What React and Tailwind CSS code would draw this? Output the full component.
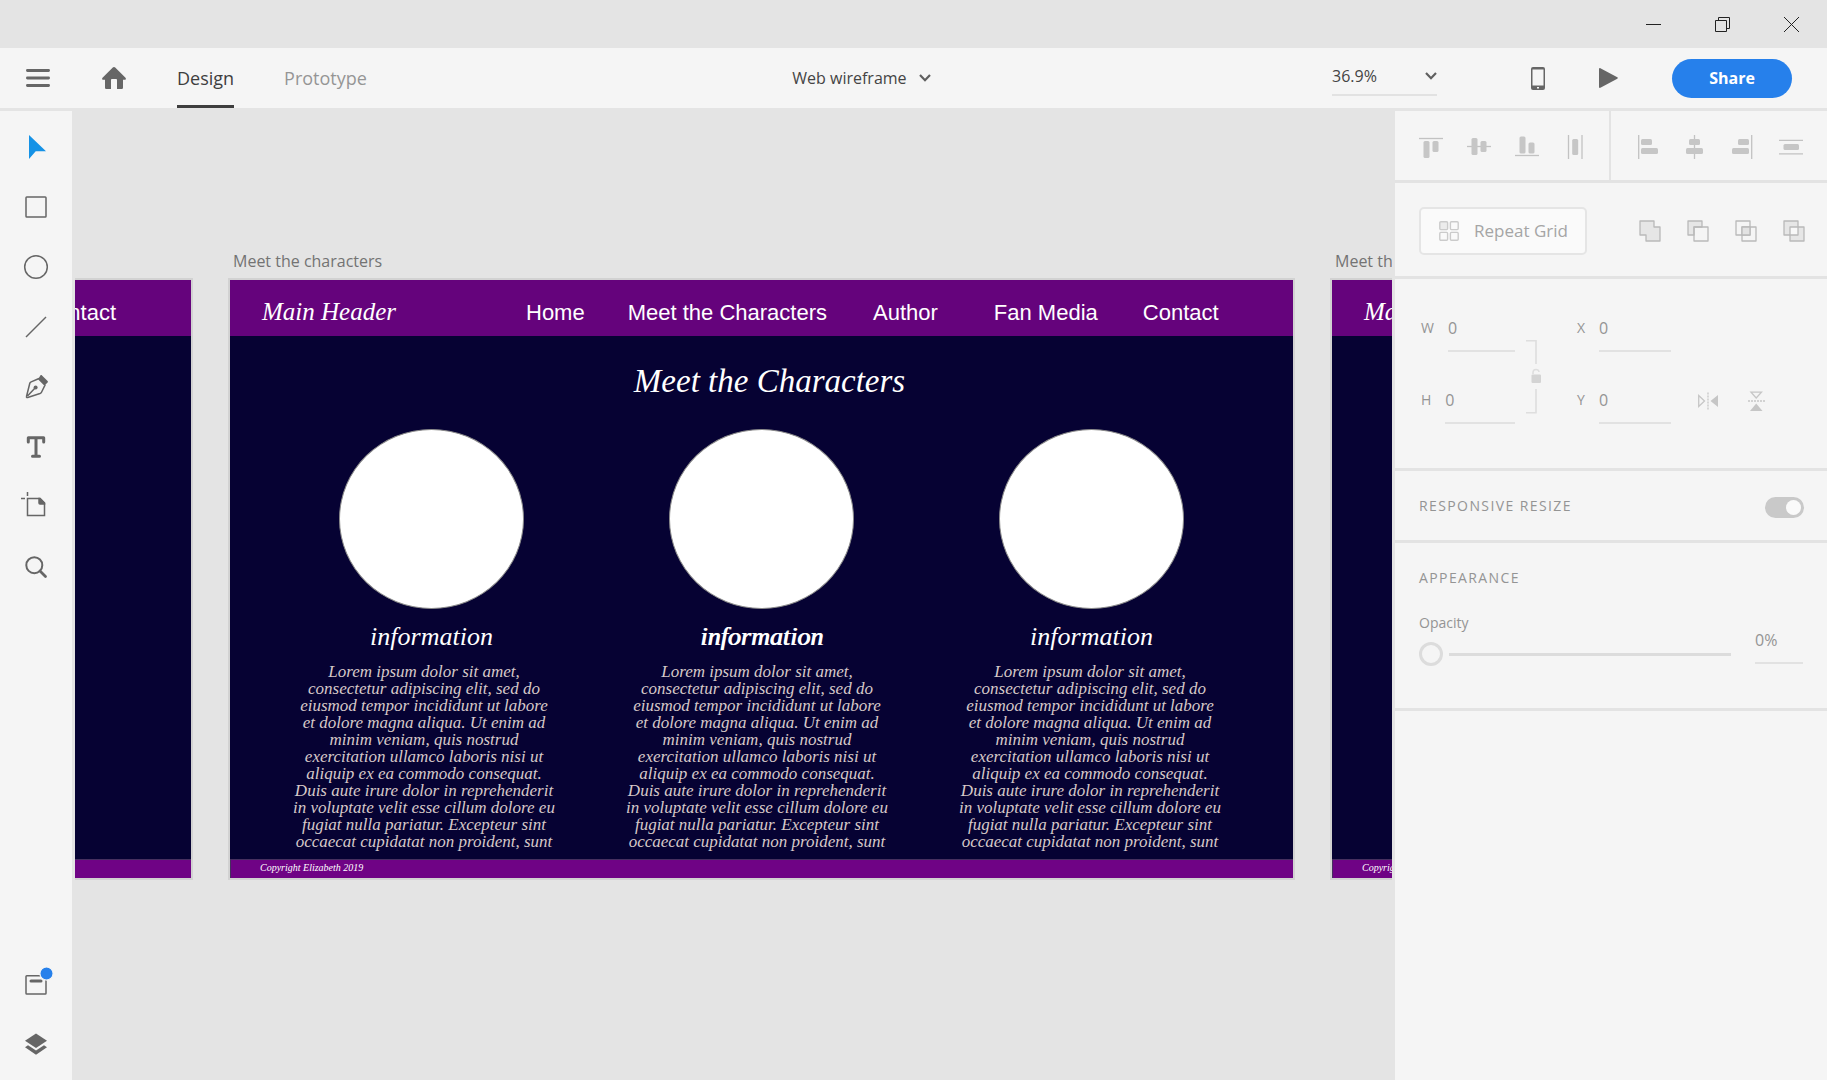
import React from "react";

const SCRIPT = "font-['Liberation_Serif',serif] italic";

const LOREM = [
  "Lorem ipsum dolor sit amet,",
  "consectetur adipiscing elit, sed do",
  "eiusmod tempor incididunt ut labore",
  "et dolore magna aliqua. Ut enim ad",
  "minim veniam, quis nostrud",
  "exercitation ullamco laboris nisi ut",
  "aliquip ex ea commodo consequat.",
  "Duis aute irure dolor in reprehenderit",
  "in voluptate velit esse cillum dolore eu",
  "fugiat nulla pariatur. Excepteur sint",
  "occaecat cupidatat non proident, sunt",
];

function TitleBar() {
  return (
    <div className="flex h-12 shrink-0 justify-end">
      <button aria-label="Minimize" className="flex w-[69px] items-center justify-center">
        <svg width="15" height="15" viewBox="0 0 15 15" stroke="#222" fill="none"><path d="M0 7.5H15" /></svg>
      </button>
      <button aria-label="Restore" className="flex w-[69px] items-center justify-center">
        <svg width="15" height="15" viewBox="0 0 15 15" stroke="#222" fill="none"><path d="M.5 3.5H11.500V14.500H.5ZM3.500 3.500V.5H14.500V11.500H11.500" /></svg>
      </button>
      <button aria-label="Close" className="mr-px flex w-[69px] items-center justify-center">
        <svg width="15" height="15" viewBox="0 0 15 15" stroke="#222" fill="none"><path d="M0 0L15 15M15 0L0 15" /></svg>
      </button>
    </div>
  );
}

function Chevron() {
  return (
    <svg width="12" height="8" viewBox="0 0 12 8" fill="none" stroke="#5f5f5f" strokeWidth="2.200"><path d="M1 1L6 6.200L11 1" /></svg>
  );
}

function AppBar() {
  return (
    <header className="flex h-[60px] shrink-0 items-stretch bg-[#f5f5f5]">
      <button aria-label="Menu" className="flex w-[76px] items-center justify-center">
        <svg width="24" height="20" viewBox="0 0 24 20" stroke="#666" strokeWidth="2.800" strokeLinecap="round"><path d="M1.400 2.500H22.600M1.400 10H22.600M1.400 17.500H22.600" /></svg>
      </button>
      <button aria-label="Home" className="flex w-[76px] items-center justify-center">
        <svg width="24" height="22" viewBox="0 0 24 22" fill="#666"><path d="M12 0C12.500 0 12.900.2 13.200.5L23.500 10.800C24.200 11.500 23.900 12.700 22.900 12.700H21V20.500C21 21.400 20.600 22 19.800 22H15V13.200C15 12.500 14.600 12 14 12H10C9.400 12 9 12.500 9 13.200V22H4.200C3.400 22 3 21.400 3 20.500V12.700H1.100C.1 12.700-.2 11.500.5 10.800L10.800.5C11.100.2 11.500 0 12 0Z" /></svg>
      </button>
      <nav className="ml-[25px] flex gap-[50px] text-[18px]">
        <button className="border-b-[3px] border-[#3e3e3e] pt-1 text-[#3e3e3e]">Design</button>
        <button className="border-b-[3px] border-transparent pt-1 text-[#959595]">Prototype</button>
      </nav>
      <div className="flex flex-1 items-center justify-center pl-6">
        <button className="flex items-center gap-3 text-[16px] text-[#444]">Web wireframe<Chevron /></button>
      </div>
      <div className="flex items-center pr-[35px]">
        <div className="relative w-[105px]">
          <select aria-label="Zoom level" className="h-9 w-full appearance-none border-b-2 border-[#e2e2e2] bg-transparent pb-[2px] text-[16px] text-[#444]">
            <option>36.9%</option>
          </select>
          <span className="pointer-events-none absolute top-3 right-0"><Chevron /></span>
        </div>
        <button aria-label="Device preview" className="ml-[66px] flex w-[70px] items-center justify-center">
          <svg width="14" height="23" viewBox="0 0 14 23"><rect width="14" height="23" rx="2" fill="#666" /><rect x="1.500" y="2.500" width="11" height="16" fill="#f5f5f5" /><rect x="6" y="20" width="2" height="1.500" fill="#f5f5f5" /></svg>
        </button>
        <button aria-label="Play" className="flex w-[70px] items-center justify-center">
          <svg width="19" height="20" viewBox="0 0 19 20" fill="#666"><path d="M0 1C0 .2.7-.2 1.400.2L18.300 9.300C19 9.700 19 10.300 18.300 10.700L1.400 19.800C.7 20.200 0 19.800 0 19Z" /></svg>
        </button>
        <button className="ml-[29px] h-[39px] w-[120px] rounded-full bg-[#2680eb] text-[16px] font-bold text-white">Share</button>
      </div>
    </header>
  );
}

/* Each drawing uses a 72 x 60 box, the size of one tool slot. */
function Tool({ label, children }) {
  return (
    <button aria-label={label} className="block h-[60px] w-[72px]">
      <svg className="h-[60px] w-[72px]" viewBox="0 0 72 60" fill="none" stroke="#666" strokeWidth="1.500">{children}</svg>
    </button>
  );
}

function Toolbar() {
  return (
    <aside className="flex w-[72px] shrink-0 flex-col justify-between bg-[#f5f5f5] pt-[6px] pb-[5px]">
      <div>
        <Tool label="Select"><path d="M29 18V42L35.700 34.300H46Z" fill="#1592e6" stroke="none" /></Tool>
        <Tool label="Rectangle"><rect x="26" y="20" width="20" height="20" rx=".8" /></Tool>
        <Tool label="Ellipse"><circle cx="36" cy="30" r="11.300" /></Tool>
        <Tool label="Line"><path d="M26 40L46 20" /></Tool>
        <Tool label="Pen">
          <path d="M26.500 39.500L29.800 26.300C30 25.500 30.500 25.200 31.200 24.900L38.500 21.700L45 28.200L41.500 35.200C41.200 35.900 40.800 36.200 40 36.500L28.500 40.300C27 40.700 26.200 40.500 26.500 39.500ZM27.500 39L35.500 30.500" />
          <circle cx="35.600" cy="30.400" r="2" fill="#666" stroke="none" />
          <path d="M40.500 18.300C41 17.800 41.500 17.900 42 18.400L47.600 24C48.100 24.500 48.100 24.900 47.600 25.400L45 28L38.500 21.500Z" fill="#666" stroke="none" />
        </Tool>
        <Tool label="Text"><path d="M28.300 25V20.700H43.700V25M36 21V39M32.500 39.200H39.500" strokeWidth="3" strokeLinecap="round" strokeLinejoin="round" /></Tool>
        <Tool label="Artboard">
          <path d="M27.500 21.500H40L44.500 26V38.500H27.500ZM21 21.500H25M27.500 15V19" />
          <path d="M39 21.500V26C39 26.500 39.500 27 40 27H44.500V26L40 21.500Z" fill="#666" />
        </Tool>
        <Tool label="Zoom"><circle cx="34.300" cy="28.200" r="8" strokeWidth="2" /><path d="M40 34L45.500 39.500" strokeWidth="2.800" strokeLinecap="round" /></Tool>
      </div>
      <div>
        <Tool label="Assets">
          <rect x="26" y="20.700" width="20" height="18.300" rx=".8" />
          <path d="M31 26H41" strokeWidth="3" strokeLinecap="round" />
          <circle cx="46.500" cy="18.500" r="6.600" fill="#2680eb" stroke="#f5f5f5" strokeWidth="1.200" />
        </Tool>
        <Tool label="Layers">
          <path d="M36 18.500L47 25.700L36 33L25 25.700Z" fill="#666" stroke="none" />
          <path d="M25 32.200L28 30.200L36 35.500L44 30.200L47 32.200L36 39.700Z" fill="#666" stroke="none" />
        </Tool>
      </div>
    </aside>
  );
}

function Artboard({ title, header, footer, className, children }) {
  return (
    <article className={"absolute top-[138px] w-[1063px] " + className}>
      <h2 className="h-[31px] pl-[3px] text-[16px] leading-[24px] whitespace-nowrap text-[#737373]">{title}</h2>
      <div className="flex h-[598px] flex-col bg-[#060233] text-white shadow-[0_0_0_2px_#d2d2d2]">
        <div className="flex h-14 shrink-0 items-center bg-[#65037c] pt-2 font-['Liberation_Sans',sans-serif] text-[22px] whitespace-nowrap">
          {header}
        </div>
        <div className="flex-1">{children}</div>
        <div className={"h-[19px] shrink-0 border-t border-l border-[#46305f] bg-[#6f0385] pl-[29px] text-[10px] leading-[16px] whitespace-nowrap " + SCRIPT}>
          {footer}
        </div>
      </div>
    </article>
  );
}

function Brand() {
  return <span className={"w-[264px] shrink-0 text-[25px] leading-8 " + SCRIPT}>Main Header</span>;
}

function CharactersPage() {
  return (
    <div className={SCRIPT}>
      <h3 className="pt-[21px] pb-6 pl-4 text-center text-[33px] leading-[48px]">Meet the Characters</h3>
      <div className="flex justify-center">
        {["", "[text-shadow:1px_0_#fff]", ""].map((weight, i) => (
          <div key={i} className="flex w-[330px] flex-col items-center">
            <div className="h-[180px] w-[185px] rounded-[50%] border border-[#8a8a8a] bg-white" />
            <p className={"mt-3 text-[26px] leading-8 " + weight}>information</p>
          </div>
        ))}
      </div>
      <div className="mt-[10px] flex justify-center pr-[9px] text-[17px] leading-[17px] text-[#d6c9c9]">
        {[0, 1, 2].map((i) => (
          <p key={i} className="w-[333px] text-center whitespace-nowrap">
            {LOREM.map((line) => (
              <span key={line} className="block">{line}</span>
            ))}
          </p>
        ))}
      </div>
    </div>
  );
}

function Canvas() {
  return (
    <main className="relative mx-[3px] min-w-0 flex-1 overflow-hidden">
      <Artboard className="left-[-947px]" header={<a href="#contact" className="mr-[75px] ml-auto">Contact</a>} />
      <Artboard
        title="Meet the characters"
        className="left-[155px]"
        footer="Copyright Elizabeth 2019"
        header={
          <div className="flex items-center pl-8">
            <Brand />
            <a href="#home">Home</a>
            <a href="#characters" className="ml-[43px]">Meet the Characters</a>
            <a href="#author" className="ml-[46px]">Author</a>
            <a href="#media" className="ml-[56px]">Fan Media</a>
            <a href="#contact" className="ml-[45px]">Contact</a>
          </div>
        }
      >
        <CharactersPage />
      </Artboard>
      <Artboard
        title="Meet the author"
        className="left-[1257px]"
        footer="Copyright Elizabeth 2019"
        header={<div className="flex pl-8"><Brand /></div>}
      />
    </main>
  );
}

/* Alignment icons: 48 x 69 slots, thin guides and rounded bars. */
function Align({ label, guides, bars }) {
  return (
    <button aria-label={label} className="h-[69px] w-12">
      <svg className="h-[69px] w-12" viewBox="0 0 48 69" fill="#c6c6c6" stroke="none">
        <path d={guides} stroke="#c2c2c2" strokeWidth="1.300" />
        {bars.map(([x, y, w, h]) => (
          <rect key={x + "-" + y} x={x} y={y} width={w} height={h} rx="1.500" />
        ))}
      </svg>
    </button>
  );
}

function AlignRow() {
  return (
    <section className="flex justify-between border-b-[3px] border-[#e3e3e3]">
      <div className="flex border-r-2 border-[#e3e3e3] pr-[10px] pl-3">
        <Align label="Align top" guides="M12 27.500H36" bars={[[16.5, 30, 6, 17], [25.5, 30, 6, 11]]} />
        <Align label="Align middle" guides="M12 35.500H36" bars={[[16.500, 27, 6, 17], [25.500, 30, 6, 11]]} />
        <Align label="Align bottom" guides="M12 44.500H36" bars={[[16.500, 25.500, 6, 17], [25.500, 31.500, 6, 11]]} />
        <Align label="Distribute horizontally" guides="M17.500 24V48M31 24V48" bars={[[21.200, 28, 6, 16]]} />
      </div>
      <div className="flex pr-3">
        <Align label="Align left" guides="M15.700 24V48" bars={[[18, 28, 11, 6], [18, 37, 17, 6]]} />
        <Align label="Align center" guides="M23.500 24V48" bars={[[18, 28, 11, 6], [15, 37, 17, 6]]} />
        <Align label="Align right" guides="M32.700 24V48" bars={[[19, 28, 11, 6], [13, 37, 17, 6]]} />
        <Align label="Distribute vertically" guides="M12 29.300H36M12 42.800H36" bars={[[16.500, 33, 15.500, 6]]} />
      </div>
    </section>
  );
}

function Bool({ label, children }) {
  return (
    <button aria-label={label} className="h-12 w-12">
      <svg className="h-12 w-12" viewBox="0 0 48 48" fill="none" stroke="#b9b9b9" strokeWidth="1.300" strokeLinejoin="round">{children}</svg>
    </button>
  );
}

function RepeatRow() {
  return (
    <section className="flex justify-between border-b-[3px] border-[#e3e3e3] pt-6 pr-[9px] pb-[21px] pl-6">
      <button className="flex h-12 w-[168px] items-center gap-[15px] rounded-[5px] border-2 border-[#e5e5e5] bg-[#fafafa] pl-[18px] text-[17px] text-[#a5a5a5]">
        <svg width="20" height="20" viewBox="0 0 20 20" fill="none" stroke="#cbcbcb" strokeWidth="1.400">
          <rect x=".8" y=".8" width="7.800" height="7.800" rx="1" fill="#ececec" />
          <rect x="11.400" y=".8" width="7.800" height="7.800" rx="1" />
          <rect x=".8" y="11.400" width="7.800" height="7.800" rx="1" />
          <rect x="11.400" y="11.400" width="7.800" height="7.800" rx="1" />
        </svg>
        Repeat Grid
      </button>
      <div className="flex">
        <Bool label="Add"><path d="M14 14H28V20H34V34H20V28H14Z" fill="#e6e6e6" /></Bool>
        <Bool label="Subtract"><path d="M14 14H28V20H20V28H14Z" fill="#e6e6e6" /><path d="M20 20H34V34H20Z" /></Bool>
        <Bool label="Intersect"><path d="M14 14H28V28H14ZM20 20H34V34H20Z" /><path d="M20 20H28V28H20Z" fill="#e2e2e2" /></Bool>
        <Bool label="Exclude Overlap"><path d="M14 14H28V20H34V34H20V28H14Z" fill="#e6e6e6" /><path d="M20 20H28V28H20Z" fill="#f8f8f8" /></Bool>
      </div>
    </section>
  );
}

function Field({ label, gap }) {
  return (
    <label className="flex h-9 w-[94px] text-[14px] leading-6 text-[#949494]">
      <span className={gap}>{label}</span>
      <input defaultValue="0" className="h-9 w-0 min-w-0 flex-1 border-b-2 border-[#e2e2e2] bg-transparent pb-[10px] text-[16px] leading-6" />
    </label>
  );
}

function TransformRow() {
  return (
    <section className="flex border-b-[3px] border-[#e3e3e3] pt-[37px] pb-11 pl-[26px]">
      <div className="flex flex-col gap-9">
        <Field label="W" gap="pr-[14px]" />
        <Field label="H" gap="pr-[14px]" />
      </div>
      <button aria-label="Lock aspect ratio" className="h-[108px] w-[62px]">
        <svg className="h-[108px] w-[62px]" viewBox="0 0 62 108" fill="none" stroke="#dedede" strokeWidth="1.600">
          <path d="M11 24.800H21V48M21 73V96.800H11" />
          <path d="M18 58V56.500C18 52.500 24 52.500 24 56" />
          <rect x="16.500" y="58.500" width="9.500" height="8.500" rx="1" fill="#d4d4d4" stroke="none" />
        </svg>
      </button>
      <div className="flex flex-col gap-9">
        <Field label="X" gap="w-[22px]" />
        <Field label="Y" gap="w-[22px]" />
      </div>
      <div className="flex items-end pl-[13px]">
        <button aria-label="Flip horizontally" className="h-12 w-12">
          <svg className="h-12 w-12" viewBox="0 -1 48 48" fill="none" stroke="#c6c6c6" strokeWidth="1.300">
            <path d="M14.700 18.500L20.500 24L14.700 29.500Z" /><path d="M34 18V30L26.500 24Z" fill="#c6c6c6" stroke="none" /><path d="M24 15.500V33" strokeDasharray="2 1" />
          </svg>
        </button>
        <button aria-label="Flip vertically" className="h-12 w-12">
          <svg className="h-12 w-12" viewBox="0 -1 48 48" fill="none" stroke="#c6c6c6" strokeWidth="1.300">
            <path d="M19 15.200H29.500L24.200 21Z" /><path d="M18 34H30.500L24.200 26.500Z" fill="#c6c6c6" stroke="none" /><path d="M16 24H33" strokeDasharray="2 1" />
          </svg>
        </button>
      </div>
    </section>
  );
}

function Panel() {
  return (
    <aside className="w-[432px] shrink-0 bg-[#f5f5f5]">
      <AlignRow />
      <RepeatRow />
      <TransformRow />
      <section className="border-b-[3px] border-[#e3e3e3]">
        <label className="flex h-[69px] items-center justify-between pr-[23px] pl-6 text-[14px] tracking-widest text-[#949494]">
          RESPONSIVE RESIZE
          <input type="checkbox" defaultChecked className="mt-[3px] flex h-[21px] w-[39px] appearance-none items-center justify-end rounded-full bg-[#c9c9c9] pr-[3px] before:size-[15px] before:rounded-full before:bg-[#fafafa] before:content-['']" />
        </label>
      </section>
      <section className="border-b-[3px] border-[#e3e3e3] pt-[23px] pr-6 pb-[42px] pl-6 text-[#949494]">
        <h3 className="text-[14px] leading-6 tracking-widest">APPEARANCE</h3>
        <div className="mt-[21px] flex items-start">
          <label className="flex-1 text-[14px] leading-6">
            Opacity
            <input
              type="range"
              min="0"
              max="100"
              defaultValue="0"
              className="mt-[7px] block h-6 w-full appearance-none bg-transparent bg-[linear-gradient(to_right,transparent_30px,#dcdcdc_30px)] bg-[length:100%_3px] bg-center bg-no-repeat [&::-webkit-slider-thumb]:size-6 [&::-webkit-slider-thumb]:appearance-none [&::-webkit-slider-thumb]:rounded-full [&::-webkit-slider-thumb]:border-[3px] [&::-webkit-slider-thumb]:border-[#dcdcdc] [&::-webkit-slider-thumb]:bg-[#f5f5f5]"
            />
          </label>
          <input aria-label="Opacity value" defaultValue="0%" className="mt-[17px] ml-6 h-9 w-12 border-b-2 border-[#e2e2e2] bg-transparent pb-[10px] text-[16px] leading-6" />
        </div>
      </section>
    </aside>
  );
}

export default function App() {
  return (
    <div className="flex min-h-screen flex-col bg-[#e4e4e4] font-['Open_Sans','Noto_Sans',sans-serif]">
      <TitleBar />
      <AppBar />
      <div className="flex flex-1 pt-[3px]">
        <Toolbar />
        <Canvas />
        <Panel />
      </div>
    </div>
  );
}
